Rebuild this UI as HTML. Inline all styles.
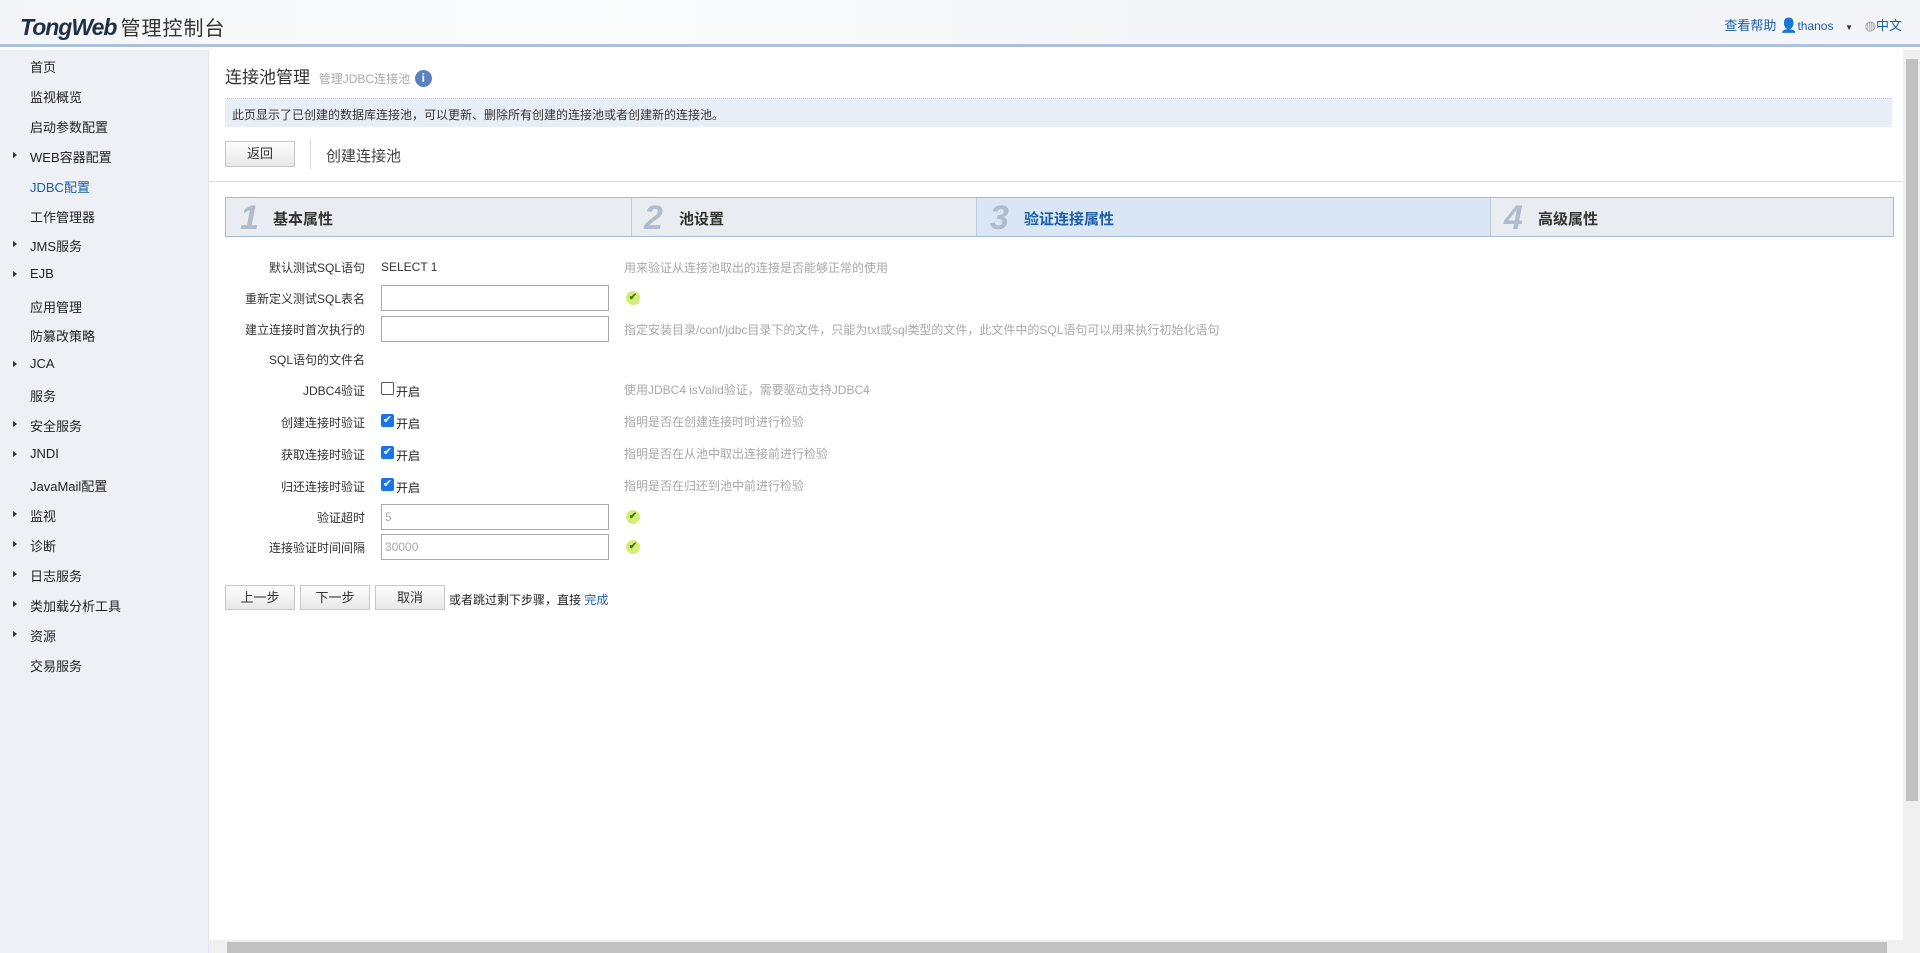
<!DOCTYPE html>
<html><head><meta charset="utf-8"><style>
*{margin:0;padding:0;box-sizing:border-box}
body{width:1920px;height:953px;overflow:hidden;font-family:"Liberation Sans","Noto Sans CJK SC",sans-serif;font-size:12px;color:#333;background:#fff;position:relative}
.hdr{position:absolute;left:0;top:0;width:1920px;height:47px;background:linear-gradient(90deg,#f3f5f8,#fbfcfd 30%,#f3f5f8 60%,#f3f5f8);border-bottom:3px solid #a9c2e0}
.logo{position:absolute;left:20px;top:12px;font:italic bold 23px "Liberation Sans",sans-serif;color:#1f3048;letter-spacing:-1px}
.logo span{font:normal 20px "Noto Sans CJK SC",sans-serif;color:#333;letter-spacing:1px;margin-left:4px}
.hr{position:absolute;right:18px;top:15px;font-size:13px;color:#1a5fa8}
.side{position:absolute;left:0;top:50px;width:209px;height:903px;background:#edf0f5;border-right:1px solid #e2e6ec}
.side div{position:absolute;left:30px;font-size:13px;color:#222;white-space:nowrap}
.side b{position:absolute;left:-17px;top:5px;border-left:4px solid #333;border-top:3px solid transparent;border-bottom:3px solid transparent}
.abs{position:absolute}
.btn{position:absolute;border:1px solid #c8c8c8;background:linear-gradient(#fdfdfd,#e8e8e8);text-align:center;font-size:13px;color:#333}
.lbl{position:absolute;right:1555px;font-size:12px;color:#333;white-space:nowrap}
.inp{position:absolute;left:381px;width:228px;height:26px;border:1px solid #a9a9a9;background:#fff;font-size:12px;color:#aaa;padding:5px 3px}
.hint{position:absolute;left:624px;font-size:12px;color:#a8a8a8;white-space:nowrap}
.ok{position:absolute;left:626px;width:14px;height:14px;border-radius:50%;background:#d8ec7a;color:#3a7d12;font-size:10px;text-align:center;line-height:14px;font-weight:bold}
.cb{position:absolute;left:381px;width:13px;height:13px;border-radius:2px}
.cb.on{background:#1a73e8;color:#fff;font-size:11px;line-height:13px;text-align:center}
.cb.off{border:1px solid #555;background:#fff}
.cbt{position:absolute;left:396px;font-size:12px;color:#222}
.step{position:absolute;top:198px;height:38px;width:300px}
.num{position:absolute;top:1px;left:0;font:italic bold 34px "Liberation Sans",sans-serif;color:#b0bccd}
.stt{position:absolute;top:10px;font-size:15px;font-weight:bold;color:#333;white-space:nowrap}
</style></head><body>
<div class="hdr"><div class="logo">TongWeb<span>管理控制台</span></div>
<div class="hr">查看帮助 <span style="color:#aab;font-size:14px">&#x1F464;</span><span style="font-size:12px">thanos</span> <span style="color:#333;font-size:8px;margin:0 8px">▼</span> <span style="color:#999">◍</span>中文</div></div>
<div class="side">
<div style="top:7px">首页</div><div style="top:37px">监视概览</div><div style="top:67px">启动参数配置</div>
<div style="top:97px"><b></b>WEB容器配置</div><div style="top:127px;color:#1a5fa8">JDBC配置</div>
<div style="top:157px">工作管理器</div><div style="top:186px"><b></b>JMS服务</div><div style="top:216px"><b></b>EJB</div>
<div style="top:247px">应用管理</div><div style="top:276px">防篡改策略</div><div style="top:306px"><b></b>JCA</div>
<div style="top:336px">服务</div><div style="top:366px"><b></b>安全服务</div><div style="top:396px"><b></b>JNDI</div>
<div style="top:426px">JavaMail配置</div><div style="top:456px"><b></b>监视</div><div style="top:486px"><b></b>诊断</div>
<div style="top:516px"><b></b>日志服务</div><div style="top:546px"><b></b>类加载分析工具</div><div style="top:576px"><b></b>资源</div>
<div style="top:606px">交易服务</div></div>

<div class="abs" style="left:225px;top:63px;font-size:17px;color:#333;white-space:nowrap">连接池管理 <span style="font-size:12px;color:#aaa;margin-left:4px">管理JDBC连接池</span> <span style="display:inline-block;width:17px;height:17px;border-radius:50%;background:#5b83c0;color:#fff;font-size:12px;text-align:center;line-height:17px;font-weight:bold;vertical-align:1px">i</span></div>
<div class="abs" style="left:225px;top:98px;width:1667px;height:29px;background:#e8eef6;border-top:1px dotted #ccd;font-size:12px;padding:7px 7px">此页显示了已创建的数据库连接池，可以更新、删除所有创建的连接池或者创建新的连接池。</div>
<div class="btn" style="left:225px;top:141px;width:70px;height:26px;line-height:24px">返回</div>
<div class="abs" style="left:310px;top:139px;width:1px;height:30px;background:#ddd"></div>
<div class="abs" style="left:326px;top:145px;font-size:15px;color:#444">创建连接池</div>
<div class="abs" style="left:209px;top:181px;width:1695px;height:1px;background:#ddd"></div>

<div class="abs" style="left:225px;top:197px;width:1669px;height:40px;border:1px solid #a9bbd3;background:#e9ecf0"></div>
<div class="abs" style="left:976px;top:198px;width:514px;height:38px;background:#dbe6f5"></div>
<div class="abs" style="left:631px;top:198px;width:1px;height:38px;background:#bfcadb"></div>
<div class="abs" style="left:976px;top:198px;width:1px;height:38px;background:#bfcadb"></div>
<div class="abs" style="left:1490px;top:198px;width:1px;height:38px;background:#bfcadb"></div>
<div class="step" style="left:240px"><span class="num">1</span><span class="stt" style="left:33px">基本属性</span></div>
<div class="step" style="left:644px"><span class="num">2</span><span class="stt" style="left:35px">池设置</span></div>
<div class="step" style="left:990px"><span class="num">3</span><span class="stt" style="left:34px;color:#1a5fa8">验证连接属性</span></div>
<div class="step" style="left:1504px"><span class="num">4</span><span class="stt" style="left:34px">高级属性</span></div>

<div class="lbl" style="top:259px">默认测试SQL语句</div><div class="abs" style="left:381px;top:260px;font-size:12px">SELECT 1</div><div class="hint" style="top:259px">用来验证从连接池取出的连接是否能够正常的使用</div>
<div class="lbl" style="top:290px">重新定义测试SQL表名</div><div class="inp" style="top:285px"></div><div class="ok" style="top:291px">✔</div>
<div class="lbl" style="top:321px">建立连接时首次执行的</div><div class="inp" style="top:316px"></div><div class="hint" style="top:321px">指定安装目录/conf/jdbc目录下的文件，只能为txt或sql类型的文件，此文件中的SQL语句可以用来执行初始化语句</div>
<div class="lbl" style="top:351px">SQL语句的文件名</div>
<div class="lbl" style="top:382px">JDBC4验证</div><div class="cb off" style="top:382px"></div><div class="cbt" style="top:383px">开启</div><div class="hint" style="top:381px">使用JDBC4 isValid验证，需要驱动支持JDBC4</div>
<div class="lbl" style="top:414px">创建连接时验证</div><div class="cb on" style="top:414px">✔</div><div class="cbt" style="top:415px">开启</div><div class="hint" style="top:413px">指明是否在创建连接时时进行检验</div>
<div class="lbl" style="top:446px">获取连接时验证</div><div class="cb on" style="top:446px">✔</div><div class="cbt" style="top:447px">开启</div><div class="hint" style="top:445px">指明是否在从池中取出连接前进行检验</div>
<div class="lbl" style="top:478px">归还连接时验证</div><div class="cb on" style="top:478px">✔</div><div class="cbt" style="top:479px">开启</div><div class="hint" style="top:477px">指明是否在归还到池中前进行检验</div>
<div class="lbl" style="top:509px">验证超时</div><div class="inp" style="top:504px">5</div><div class="ok" style="top:510px">✔</div>
<div class="lbl" style="top:539px">连接验证时间间隔</div><div class="inp" style="top:534px">30000</div><div class="ok" style="top:540px">✔</div>

<div class="btn" style="left:225px;top:585px;width:70px;height:25px;line-height:23px">上一步</div>
<div class="btn" style="left:300px;top:585px;width:70px;height:25px;line-height:23px">下一步</div>
<div class="btn" style="left:375px;top:585px;width:70px;height:25px;line-height:23px">取消</div>
<div class="abs" style="left:449px;top:591px;font-size:12px;color:#222;white-space:nowrap">或者跳过剩下步骤，直接 <span style="color:#1a5fa8">完成</span></div>

<div class="abs" style="left:1903px;top:50px;width:17px;height:890px;background:#f0f0f0"></div>
<div class="abs" style="left:1906px;top:59px;width:12px;height:742px;background:#c1c1c1"></div>
<div class="abs" style="left:209px;top:940px;width:1711px;height:13px;background:#f0f0f0"></div>
<div class="abs" style="left:227px;top:942px;width:1660px;height:11px;background:#c1c1c1"></div>
</body></html>
